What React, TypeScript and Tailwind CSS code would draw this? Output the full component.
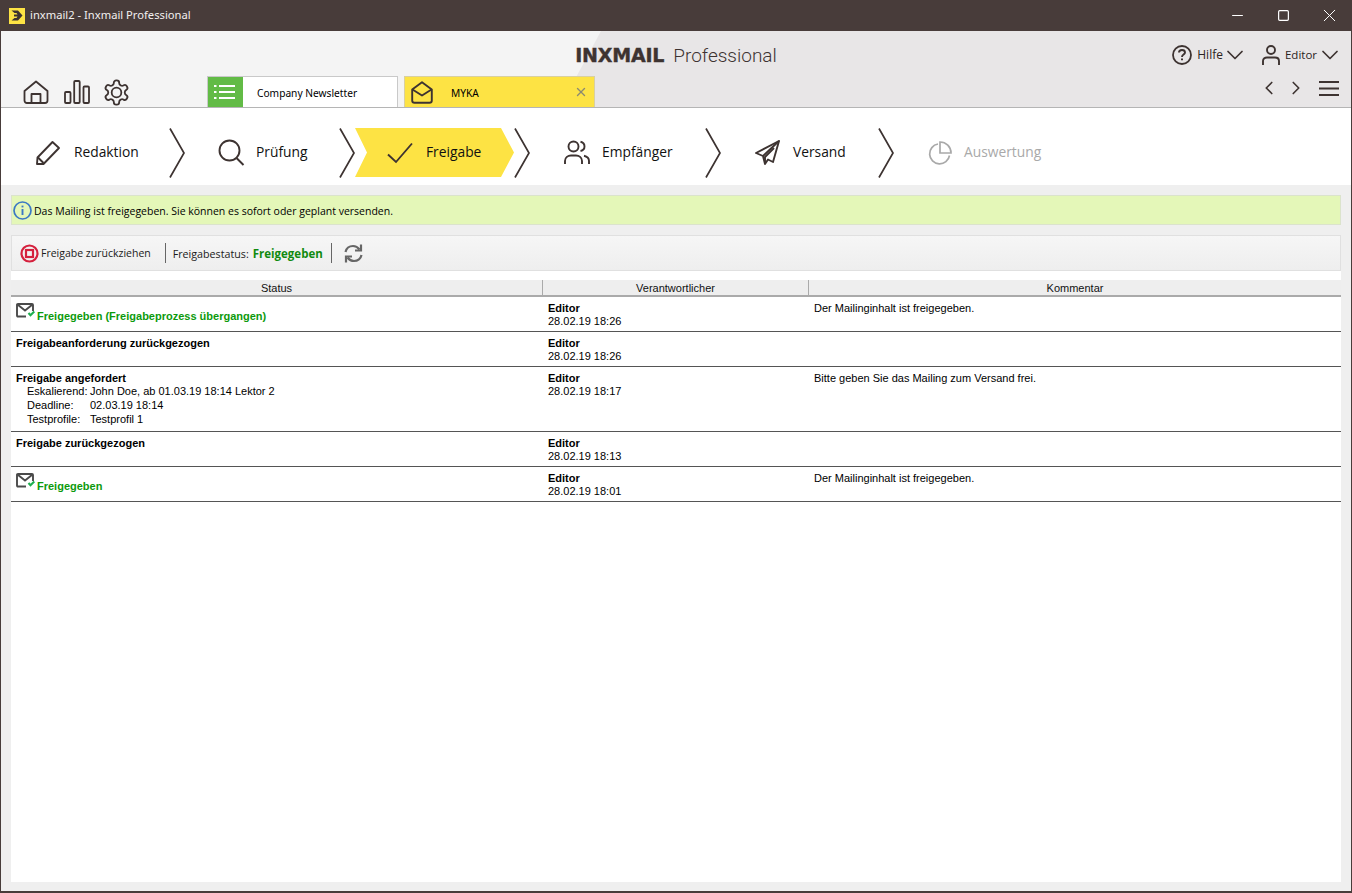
import { ChevronDown, ChevronLeft, ChevronRight, X, Minus, Square } from 'lucide-react'

const ink = '#3d3331'

const Chevron = () => (
  <svg width="16" height="50" viewBox="0 0 16 50" className="shrink-0">
    <path d="M1 0.5 L15 25 L1 49.5" fill="none" stroke={ink} strokeWidth="1.7" />
  </svg>
)

const PencilIcon = () => (
  <svg width="26" height="26" viewBox="0 0 26 26" fill="none" stroke={ink} strokeWidth="1.9">
    <path d="M2 24 L2.5 17.5 L17.5 2 L24 8 L8.5 24 Z" strokeLinejoin="round" />
    <path d="M3 17.5 L8.5 23" />
  </svg>
)

const SearchIcon = () => (
  <svg width="27" height="27" viewBox="0 0 27 27" fill="none" stroke={ink} strokeWidth="1.9">
    <circle cx="11.5" cy="11.5" r="10" />
    <path d="M18.5 19 L25.5 26" />
  </svg>
)

const CheckIcon = () => (
  <svg width="26" height="22" viewBox="0 0 26 22" fill="none" stroke={ink} strokeWidth="1.9">
    <path d="M1 12.5 L9 20 L25 1.5" />
  </svg>
)

const UsersIcon = () => (
  <svg width="26" height="26" viewBox="0 0 26 26" fill="none" stroke={ink} strokeWidth="1.9">
    <circle cx="9.5" cy="6.5" r="5" />
    <path d="M1 24 V21 C1 17.5 4 15.5 7 15.5 H12 C15 15.5 18 17.5 18 21 V24" />
    <path d="M16.5 1.8 C19.5 2.5 20.5 5 20.5 6.5 C20.5 8.5 19 10.5 16.5 11" />
    <path d="M20 15.8 C23 16.5 25 18.5 25 21 V24" />
  </svg>
)

const SendIcon = () => (
  <svg width="25" height="25" viewBox="0 0 25 25" fill="none" stroke={ink} strokeWidth="1.9" strokeLinejoin="round">
    <path d="M24 1 L1 13 L8 16 L10 24 L13 19.5 L18 22 Z" />
    <path d="M24 1 L8 16" />
    <path d="M19 8 L10 17 L10 24" />
  </svg>
)

const PieIcon = () => (
  <svg width="24" height="24" viewBox="0 0 24 24" fill="none" stroke="#a9a9a9" strokeWidth="1.7">
    <path d="M10 3 A10 10 0 1 0 21.5 14.5" />
    <path d="M12 1 A11 11 0 0 1 23 12 H12 Z" />
  </svg>
)

const HomeIcon = () => (
  <svg width="26" height="24" viewBox="0 0 26 24" fill="none" stroke={ink} strokeWidth="1.8" strokeLinejoin="round">
    <path d="M1.5 11 L13 1.5 L24.5 11 V20.5 C24.5 22 23.5 23 22 23 H4 C2.5 23 1.5 22 1.5 20.5 Z" />
    <path d="M8.5 23 V14 H17.5 V23" />
  </svg>
)

const BarsIcon = () => (
  <svg width="26" height="24" viewBox="0 0 26 24" fill="none" stroke={ink} strokeWidth="1.8">
    <rect x="1" y="12" width="5.5" height="11" rx="1" />
    <rect x="10.2" y="1" width="5.5" height="22" rx="1" />
    <rect x="19.5" y="6.5" width="5.5" height="16.5" rx="1" />
  </svg>
)

const GearIcon = () => (
  <svg width="29" height="29" viewBox="0 0 24 24" fill="none" stroke={ink} strokeWidth="1.5" strokeLinejoin="round" className="-ml-[3px] -my-[3px]">
    <path d="M12.22 2h-.44a2 2 0 0 0-2 2v.18a2 2 0 0 1-1 1.73l-.43.25a2 2 0 0 1-2 0l-.15-.08a2 2 0 0 0-2.73.73l-.22.38a2 2 0 0 0 .73 2.73l.15.1a2 2 0 0 1 1 1.72v.51a2 2 0 0 1-1 1.74l-.15.09a2 2 0 0 0-.73 2.73l.22.38a2 2 0 0 0 2.73.73l.15-.08a2 2 0 0 1 2 0l.43.25a2 2 0 0 1 1 1.73V20a2 2 0 0 0 2 2h.44a2 2 0 0 0 2-2v-.18a2 2 0 0 1 1-1.73l.43-.25a2 2 0 0 1 2 0l.15.08a2 2 0 0 0 2.73-.73l.22-.39a2 2 0 0 0-.73-2.73l-.15-.08a2 2 0 0 1-1-1.74v-.5a2 2 0 0 1 1-1.74l.15-.09a2 2 0 0 0 .73-2.73l-.22-.38a2 2 0 0 0-2.73-.73l-.15.08a2 2 0 0 1-2 0l-.43-.25a2 2 0 0 1-1-1.73V4a2 2 0 0 0-2-2z" />
    <circle cx="12" cy="12" r="4" />
  </svg>
)

const ListIcon = () => (
  <svg width="21" height="16" viewBox="0 0 21 16" fill="none" stroke="#fff" strokeWidth="2">
    <path d="M0 2 H2.5 M5 2 H21 M0 8 H2.5 M5 8 H21 M0 14 H2.5 M5 14 H21" />
  </svg>
)

const TabMailIcon = () => (
  <svg width="22" height="23" viewBox="0 0 22 23" fill="none" stroke={ink} strokeWidth="1.9" strokeLinejoin="round">
    <path d="M1.2 8.5 L11 1.2 L20.8 8.5 V19.5 C20.8 21 20 21.8 18.5 21.8 H3.5 C2 21.8 1.2 21 1.2 19.5 Z" />
    <path d="M1.5 8.5 L11 14.5 L20.5 8.5" />
  </svg>
)

const HelpIcon = () => (
  <svg width="20" height="20" viewBox="0 0 20 20" fill="none" stroke={ink} strokeWidth="1.8">
    <circle cx="10" cy="10" r="9" />
    <path d="M7 7.6 C7 5.8 8.4 5 10 5 C11.7 5 13 6 13 7.5 C13 9.6 10 9.6 10 12" strokeWidth="1.9" />
    <path d="M10 13.5 V15.2" strokeWidth="2" />
  </svg>
)

const PersonIcon = () => (
  <svg width="18" height="20" viewBox="0 0 18 20" fill="none" stroke={ink} strokeWidth="1.9">
    <circle cx="9" cy="5" r="4" />
    <path d="M1 20 V16 C1 13.5 3 12.5 5 12.5 H13 C15 12.5 17 13.5 17 16 V20" />
  </svg>
)

const MenuIcon = () => (
  <svg width="20" height="15" viewBox="0 0 20 15" fill="none" stroke={ink} strokeWidth="2">
    <path d="M0 1 H20 M0 7.5 H20 M0 14 H20" />
  </svg>
)

const InfoIcon = () => (
  <svg width="19" height="19" viewBox="0 0 19 19" fill="none">
    <circle cx="9.5" cy="9.5" r="8.5" stroke="#3b78c4" strokeWidth="1.7" />
    <path d="M9.5 8 V14" stroke="#3b78c4" strokeWidth="1.9" />
    <path d="M9.5 4.6 V6.4" stroke="#3b78c4" strokeWidth="1.9" />
  </svg>
)

const StopIcon = () => (
  <svg width="19" height="19" viewBox="0 0 19 19" fill="none" stroke="#d5203d">
    <circle cx="9.5" cy="9.5" r="8" strokeWidth="2.2" />
    <rect x="6" y="6" width="7" height="7" strokeWidth="2.2" />
  </svg>
)

const RefreshIcon = () => (
  <svg width="19" height="19" viewBox="0 0 19 19" fill="none" stroke="#666" strokeWidth="2.2">
    <path d="M1.5 8 C2.2 4.5 5.2 2 9 2 C11.5 2 13.8 3.2 15.5 5.5" />
    <path d="M17 0.5 V6.5 H11" />
    <path d="M17.5 11 C16.8 14.5 13.8 17 10 17 C7.5 17 5.2 15.8 3.5 13.5" />
    <path d="M2 18.5 V12.5 H8" />
  </svg>
)

const MailCheckIcon = () => (
  <svg width="19" height="15" viewBox="0 0 19 15" fill="none" className="shrink-0">
    <path d="M10 13.5 H2 C1.3 13.5 1 13.2 1 12.5 V2 C1 1.3 1.3 1 2 1 H16 C16.7 1 17 1.3 17 2 V8" stroke="#4a4a4a" strokeWidth="1.9" />
    <path d="M1.5 1.5 L9 7.5 L16.5 1.5" stroke="#4a4a4a" strokeWidth="1.9" />
    <path d="M12.5 10 L14.5 12.3 L18.3 8.5" stroke="#1fb050" strokeWidth="2.1" />
  </svg>
)

const LogoMark = () => (
  <div className="w-4 h-4 bg-[#fde344] flex items-center justify-center">
    <svg width="12" height="11" viewBox="0 0 12 11">
      <path d="M0.5 0.5 H7 L11.5 5.5 L7 10.5 H0.5 L3.5 8 H5.5 L6.5 6.5 H3 V4.5 H6.5 L5.5 3 H3.5 Z" fill="#3d3331" />
    </svg>
  </div>
)

const rows = [
  {
    state: 'Freigegeben (Freigabeprozess übergangen)',
    ok: true,
    date: '28.02.19 18:26',
    comment: 'Der Mailinginhalt ist freigegeben.',
  },
  { state: 'Freigabeanforderung zurückgezogen', date: '28.02.19 18:26', comment: '' },
  {
    state: 'Freigabe angefordert',
    date: '28.02.19 18:17',
    comment: 'Bitte geben Sie das Mailing zum Versand frei.',
    details: [
      ['Eskalierend:', 'John Doe, ab 01.03.19 18:14 Lektor 2'],
      ['Deadline:', '02.03.19 18:14'],
      ['Testprofile:', 'Testprofil 1'],
    ],
  },
  { state: 'Freigabe zurückgezogen', date: '28.02.19 18:13', comment: '' },
  {
    state: 'Freigegeben',
    ok: true,
    date: '28.02.19 18:01',
    comment: 'Der Mailinginhalt ist freigegeben.',
  },
]

export default function App() {
  return (
    <div className="w-[1352px] h-[893px] overflow-hidden flex flex-col bg-[#483c3a] px-px pb-[2px] font-['Open_Sans',sans-serif] text-black">
      {/* Title bar */}
      <div className="h-[31px] shrink-0 flex items-center pl-[8px] text-white -mx-px">
        <div className="ml-px"><LogoMark /></div>
        <span className="ml-[5px] text-[11.2px] text-[#f2f0ef] font-['Noto_Sans',sans-serif]">inxmail2 - Inxmail Professional</span>
        <div className="ml-auto flex items-center text-white">
          <div className="w-[46px] flex justify-center"><Minus size={17} strokeWidth={1} absoluteStrokeWidth /></div>
          <div className="w-[46px] flex justify-center"><Square size={13} strokeWidth={1.2} absoluteStrokeWidth /></div>
          <div className="w-[46px] flex justify-center"><X size={21} strokeWidth={1} absoluteStrokeWidth /></div>
        </div>
      </div>

      {/* Header */}
      <div className="relative h-[77px] shrink-0 flex flex-col bg-[#f4f4f4] border-b border-[#b5b5b5]">
        <div className="absolute inset-0 bg-[#e8e6e7] [clip-path:polygon(600px_0,100%_0,100%_100%,559px_100%)]" />
        <div className="relative h-[45px] pt-[3px] grid grid-cols-[1fr_auto_1fr] items-center">
          <div />
          <div className="flex items-baseline text-[#3d3331]">
            <span className="font-['DejaVu_Sans',sans-serif] font-bold text-[19px] leading-none uppercase tracking-[-0.2px] [-webkit-text-stroke:0.4px_#3d3331]">inxmail</span>
            <span className="ml-[9px] font-['Roboto',sans-serif] font-light text-[19px] leading-none">Professional</span>
          </div>
          <div className="flex items-center justify-end pr-[7px] text-[11.5px] text-[#2b2422]">
            <HelpIcon />
            <span className="ml-[5px] text-[12px]">Hilfe</span>
            <ChevronDown size={28} strokeWidth={1.5} color={ink} className="-ml-[2px]" />
            <div className="ml-[13px]"><PersonIcon /></div>
            <span className="ml-[5px]">Editor</span>
            <ChevronDown size={28} strokeWidth={1.5} color={ink} className="-ml-[1px]" />
          </div>
        </div>
        <div className="relative flex-1 flex items-end">
          <div className="w-[206px] pl-[22px] flex items-center gap-[15px] pb-[3px]">
            <HomeIcon />
            <BarsIcon />
            <GearIcon />
          </div>
          <div className="w-[191px] h-[31px] flex bg-white border border-b-0 border-[#c9c9c9]">
            <div className="w-[35px] bg-[#62bb46] flex items-center pl-[6px]"><ListIcon /></div>
            <span className="ml-[14px] self-center pt-[3px] text-[10.2px] font-['Noto_Sans',sans-serif]">Company Newsletter</span>
          </div>
          <div className="ml-[6px] w-[191px] h-[31px] flex items-center bg-[#fde344] border border-b-0 border-[#d9d0a0] pl-[6px]">
            <TabMailIcon />
            <span className="ml-[18px] pt-[3px] text-[10.2px] font-['Noto_Sans',sans-serif]">MYKA</span>
            <X size={14} strokeWidth={2.4} color="#8c8a70" className="ml-auto mr-[6px]" />
          </div>
          <div className="ml-auto flex items-center pb-[8px] pr-[12px]">
            <ChevronLeft size={22} strokeWidth={1.8} color={ink} />
            <ChevronRight size={22} strokeWidth={1.8} color={ink} className="ml-[5px]" />
            <div className="ml-[12px]"><MenuIcon /></div>
          </div>
        </div>
      </div>

      {/* Steps */}
      <div className="h-[77px] shrink-0 bg-white flex items-center pt-[12px] text-[13.8px] text-[#111]">
        <div className="w-[168px] pl-[34px] flex items-center">
          <div className="w-[39px]"><PencilIcon /></div>
          <span>Redaktion</span>
        </div>
        <Chevron />
        <div className="w-[154px] pl-[33px] flex items-center">
          <div className="w-[38px]"><SearchIcon /></div>
          <span>Prüfung</span>
        </div>
        <Chevron />
        <div className="w-[159px] h-[49px] pl-[32px] flex items-center bg-[#fde344] [clip-path:polygon(0_0,146px_0,100%_50%,146px_100%,0_100%,12px_50%)]">
          <div className="w-[39px]"><CheckIcon /></div>
          <span>Freigabe</span>
        </div>
        <Chevron />
        <div className="w-[175px] pl-[34px] flex items-center">
          <div className="w-[38px]"><UsersIcon /></div>
          <span>Empfänger</span>
        </div>
        <Chevron />
        <div className="w-[157px] pl-[34px] flex items-center">
          <div className="w-[38px]"><SendIcon /></div>
          <span>Versand</span>
        </div>
        <Chevron />
        <div className="pl-[34px] flex items-center text-[#a9a9a9]">
          <div className="w-[36px]"><PieIcon /></div>
          <span>Auswertung</span>
        </div>
      </div>

      {/* Content */}
      <div className="flex-1 bg-[#efefef] pt-[10px] px-[10px] pb-[9px] flex flex-col min-h-0">
        <div className="h-[30px] shrink-0 flex items-center bg-[#e4f7b8] border border-[#dbe3cc] pl-[1px] text-[10.5px]">
          <InfoIcon />
          <span className="ml-[2px] pt-[3px]">Das Mailing ist freigegeben. Sie können es sofort oder geplant versenden.</span>
        </div>
        <div className="mt-[10px] h-[36px] shrink-0 flex items-center bg-gradient-to-b from-[#f6f6f6] to-[#eeeeee] border border-[#e0e0e0] pl-[8px] text-[10.5px] text-[#1a1a1a]">
          <StopIcon />
          <span className="ml-[2px] pt-[2px]">Freigabe zurückziehen</span>
          <div className="ml-[14px] w-px h-[20px] bg-[#666]" />
          <span className="ml-[7px] pt-[2px] text-[10.7px]">Freigabestatus:</span>
          <span className="ml-[4px] pt-px text-[11.5px] font-bold text-[#108a10]">Freigegeben</span>
          <div className="ml-[8px] w-px h-[20px] bg-[#666]" />
          <div className="ml-[12px]"><RefreshIcon /></div>
        </div>
        <div className="flex-1 bg-white pt-[9px] font-['Liberation_Sans',sans-serif] text-[11px] leading-[13px]">
          <div className="grid grid-cols-[532px_266px_1fr] h-[17px] leading-[17px] bg-[#eeeeee] border-b-2 border-[#aaaaaa] text-center text-[#111]">
            <div className="border-r border-[#aaaaaa]">Status</div>
            <div className="border-r border-[#aaaaaa]">Verantwortlicher</div>
            <div>Kommentar</div>
          </div>
          {rows.map((row, i) => (
            <div key={i} className={`grid grid-cols-[532px_266px_1fr] border-b border-[#555] ${row.details ? 'h-[65px]' : 'h-[35px]'}`}>
              <div className="pl-[5px] pt-[5px]">
                {row.ok ? (
                  <div className="flex items-end gap-[2px] mt-px font-bold text-[#0c9a0c]">
                    <MailCheckIcon />
                    <span className="-mb-[5px]">{row.state}</span>
                  </div>
                ) : (
                  <div className="font-bold">{row.state}</div>
                )}
                {row.details && (
                  <div className="pl-[11px] -mt-px grid grid-cols-[63px_1fr]">
                    {row.details.map(([k, v]) => (
                      <div key={k} className="contents">
                        <div className="leading-[14px]">{k}</div>
                        <div className="leading-[14px]">{v}</div>
                      </div>
                    ))}
                  </div>
                )}
              </div>
              <div className="pl-[5px] pt-[5px]">
                <div className="font-bold">Editor</div>
                <div>{row.date}</div>
              </div>
              <div className="pl-[5px] pt-[5px]">{row.comment}</div>
            </div>
          ))}
        </div>
      </div>
    </div>
  )
}
